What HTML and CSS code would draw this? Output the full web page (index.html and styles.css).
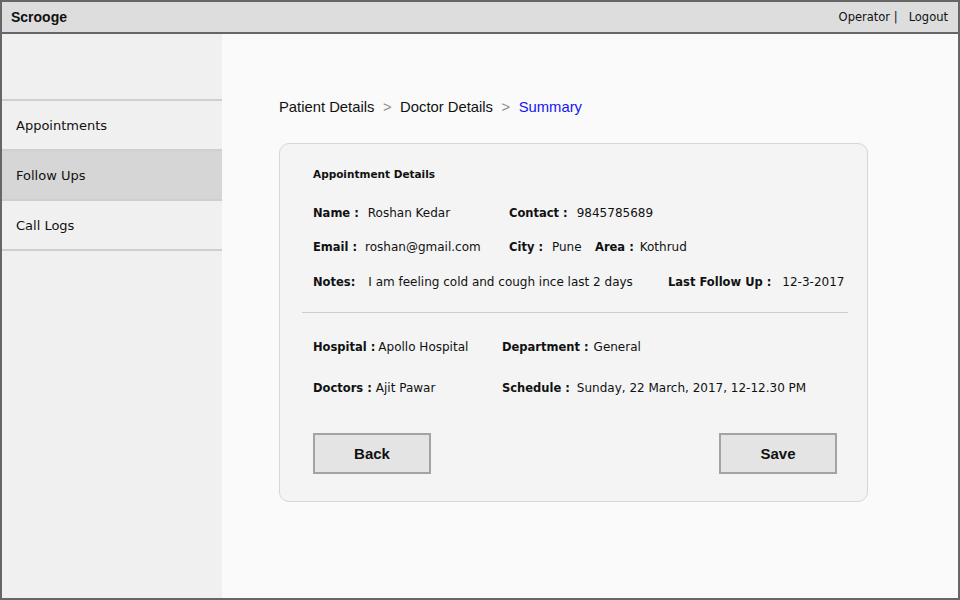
FILE: index.html
```html
<!DOCTYPE html>
<html>
<head>
<meta charset="utf-8">
<title>Scrooge</title>
<link rel="stylesheet" href="styles.css">
</head>
<body>
<div class="frame">
  <header class="topbar">
    <div class="brand">Scrooge</div>
    <div class="user"><span class="op">Operator |</span><span class="logout">Logout</span></div>
  </header>
  <div class="body">
    <nav class="sidebar">
      <div class="side-spacer"></div>
      <div class="nav-item first">Appointments</div>
      <div class="nav-item active">Follow Ups</div>
      <div class="nav-item">Call Logs</div>
    </nav>
    <main class="main">
      <div class="crumbs">
        <span class="crumb">Patient Details</span>
        <span class="sep">&gt;</span>
        <span class="crumb">Doctor Details</span>
        <span class="sep">&gt;</span>
        <span class="crumb current">Summary</span>
      </div>
      <section class="card">
        <div class="card-title">Appointment Details</div>
        <div class="row r1">
          <div class="field w196"><span class="lbl">Name :</span><span class="val v-name">Roshan Kedar</span></div>
          <div class="field"><span class="lbl">Contact :</span><span class="val v-contact">9845785689</span></div>
        </div>
        <div class="row r2">
          <div class="field w196"><span class="lbl">Email :</span><span class="val v-email">roshan@gmail.com</span></div>
          <div class="field w86"><span class="lbl">City :</span><span class="val v-city">Pune</span></div>
          <div class="field"><span class="lbl">Area :</span><span class="val v-area">Kothrud</span></div>
        </div>
        <div class="row r3">
          <div class="field w355"><span class="lbl">Notes:</span><span class="val v-notes">I am feeling cold and cough ince last 2 days</span></div>
          <div class="field"><span class="lbl">Last Follow Up :</span><span class="val v-last">12-3-2017</span></div>
        </div>
        <div class="divider"></div>
        <div class="row r4">
          <div class="field w189"><span class="lbl">Hospital :</span><span class="val v-hosp">Apollo Hospital</span></div>
          <div class="field"><span class="lbl">Department :</span><span class="val v-dept">General</span></div>
        </div>
        <div class="row r5">
          <div class="field w189"><span class="lbl">Doctors :</span><span class="val v-doc">Ajit Pawar</span></div>
          <div class="field"><span class="lbl">Schedule :</span><span class="val v-sched">Sunday, 22 March, 2017, 12-12.30 PM</span></div>
        </div>
        <div class="actions">
          <button class="btn">Back</button>
          <button class="btn">Save</button>
        </div>
      </section>
    </main>
  </div>
</div>
</body>
</html>
```

FILE: styles.css
```css
* { box-sizing: border-box; }
html, body { margin: 0; padding: 0; }
body {
  width: 960px;
  height: 600px;
  overflow: hidden;
  background: #fafafa;
  font-family: "DejaVu Sans", "Noto Sans", sans-serif;
  color: #111;
}
.frame {
  width: 960px;
  height: 600px;
  border: 2px solid #666;
  display: flex;
  flex-direction: column;
}
.topbar {
  height: 32px;
  flex: none;
  background: #dddddd;
  border-bottom: 2px solid #666;
  display: flex;
  align-items: center;
  justify-content: space-between;
  padding: 0 10px 0 9px;
}
.brand {
  font-family: "Liberation Sans", Arial, sans-serif;
  font-weight: bold;
  font-size: 14px;
  color: #111;
}
.user {
  font-size: 11.5px;
  color: #111;
  display: flex;
  gap: 11px;
}
.body {
  flex: 1;
  display: flex;
  min-height: 0;
}
.sidebar {
  width: 220px;
  flex: none;
  background: #f0f0f0;
}
.side-spacer { height: 65px; }
.nav-item {
  height: 50px;
  border-bottom: 2px solid #cfcfcf;
  padding-left: 14px;
  display: flex;
  align-items: center;
  font-size: 13px;
  color: #111;
}
.nav-item.first {
  height: 52px;
  border-top: 2px solid #cfcfcf;
}
.nav-item.active { background: #d6d6d6; }
.main {
  flex: 1;
  background: #fafafa;
  padding: 63px 0 0 57px;
}
.crumbs {
  font-family: "Liberation Sans", Arial, sans-serif;
  font-size: 14.8px;
  line-height: 20px;
  height: 20px;
  display: flex;
  gap: 8.5px;
  color: #111;
}
.sep { color: #8a8a8a; }
.current { color: #1515f5; }
.card {
  margin-top: 26px;
  width: 589px;
  height: 359px;
  background: #f4f4f4;
  border: 1px solid #d6d6d6;
  border-radius: 10px;
  padding: 20px 30px 0 33px;
}
.card-title {
  font-weight: bold;
  font-size: 10.5px;
  line-height: 20px;
  height: 20px;
}
.row {
  display: flex;
  height: 20px;
  line-height: 20px;
  white-space: nowrap;
}
.r1 { margin-top: 19px; }
.r2 { margin-top: 14px; }
.r3 { margin-top: 15px; }
.r4 { margin-top: 24px; }
.r5 { margin-top: 21px; }
.field { display: flex; flex: none; }
.w196 { width: 196px; }
.w86 { width: 86px; }
.w355 { width: 355px; }
.w189 { width: 189px; }
.lbl { font-weight: bold; font-size: 11.5px; }
.val { font-size: 12px; margin-left: 8px; }
.v-name { margin-left: 9px; }
.v-contact { margin-left: 9px; }
.v-email { margin-left: 8px; }
.v-city { margin-left: 9px; }
.v-area { margin-left: 6px; }
.v-notes { margin-left: 13px; }
.v-last { margin-left: 11px; }
.v-hosp { margin-left: 3px; }
.v-dept { margin-left: 5px; }
.v-doc { margin-left: 4px; }
.v-sched { margin-left: 7px; }
.divider {
  height: 1px;
  background: #cccccc;
  margin: 20px -11px 0 -11px;
}
.actions {
  margin-top: 35px;
  display: flex;
  justify-content: space-between;
}
.btn {
  width: 118px;
  height: 41px;
  background: #e4e4e4;
  border: 2px solid #a3a3a3;
  border-radius: 0;
  font-family: "Liberation Sans", Arial, sans-serif;
  font-weight: bold;
  font-size: 15px;
  color: #111;
  padding: 0;
}
```
